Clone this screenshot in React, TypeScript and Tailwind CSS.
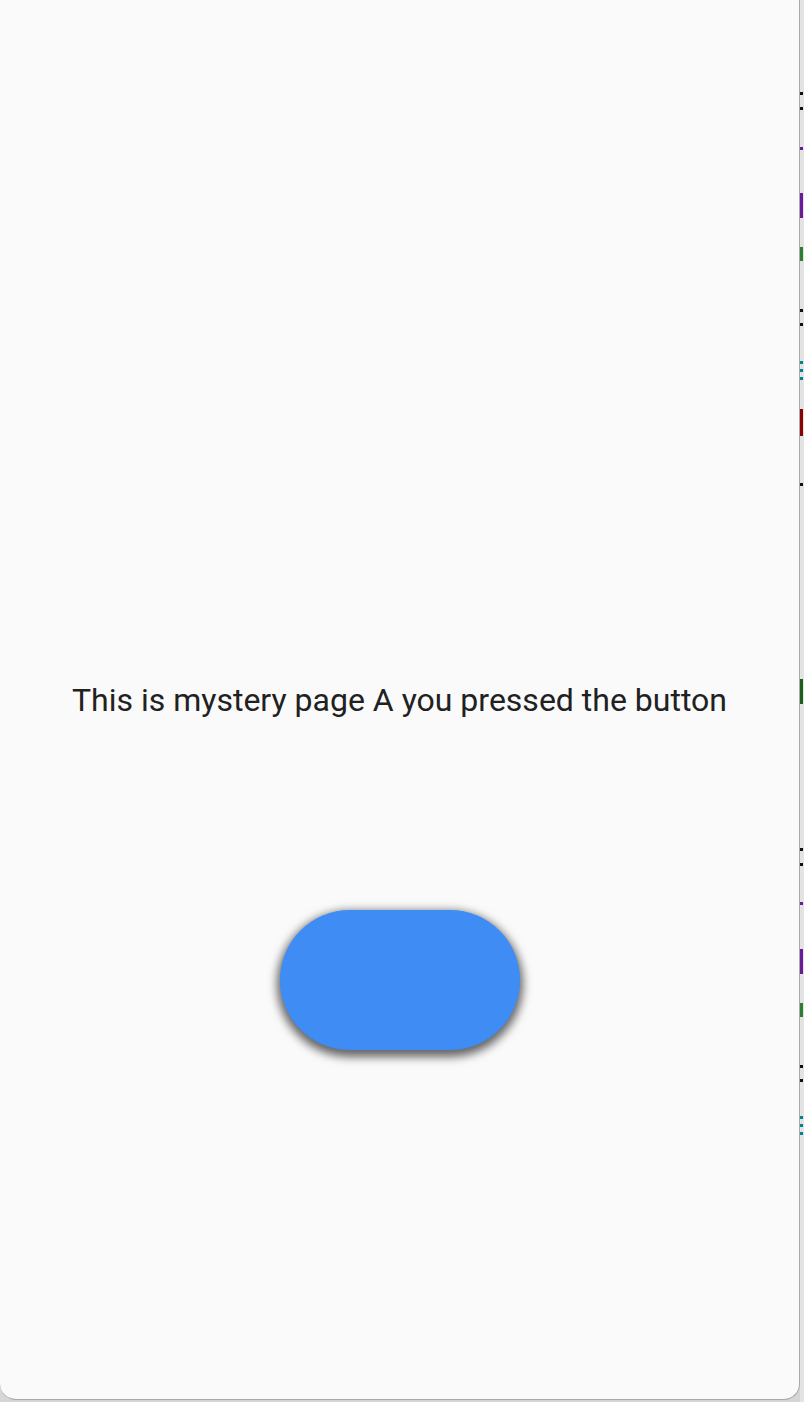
import React from "react";

// bits of the page behind, peeking out past the card's right edge
const PEEK: Array<{ top: number; h: number; color: string }> = [
  { top: 92, h: 3, color: "#111111" },
  { top: 107, h: 3, color: "#111111" },
  { top: 147, h: 3, color: "#6a1b9a" },
  { top: 193, h: 25, color: "#6a1b9a" },
  { top: 247, h: 14, color: "#2e7d32" },
  { top: 309, h: 3, color: "#111111" },
  { top: 323, h: 3, color: "#111111" },
  { top: 361, h: 3, color: "#00838f" },
  { top: 369, h: 3, color: "#00838f" },
  { top: 377, h: 3, color: "#00838f" },
  { top: 409, h: 27, color: "#8b0000" },
  { top: 483, h: 3, color: "#111111" },
  { top: 679, h: 25, color: "#1b5e20" },
  { top: 848, h: 3, color: "#111111" },
  { top: 863, h: 3, color: "#111111" },
  { top: 902, h: 3, color: "#6a1b9a" },
  { top: 949, h: 25, color: "#6a1b9a" },
  { top: 1003, h: 14, color: "#2e7d32" },
  { top: 1065, h: 3, color: "#111111" },
  { top: 1079, h: 3, color: "#111111" },
  { top: 1116, h: 3, color: "#00838f" },
  { top: 1124, h: 3, color: "#00838f" },
  { top: 1132, h: 3, color: "#00838f" },
];

export default function App() {
  return (
    <div className="relative flex h-[1402px] w-[804px] overflow-hidden bg-[#d6d6d6]">
      <div
        className="flex h-[1400px] w-[800px] shrink-0 flex-col items-center rounded-b-[16px] border-r border-b border-[#a8a8a8] bg-[#fafafa] pt-[681px]"
        style={{ fontFamily: "Roboto, 'Liberation Sans', sans-serif" }}
      >
        <p className="text-[32px] leading-[38px] text-[#212121]">This is mystery page A you pressed the button</p>
        <button
          type="button"
          className="mt-[191px] h-[140px] w-[240px] rounded-full bg-[#3f8df4] shadow-[0_4px_10px_3px_rgba(0,0,0,0.6)]"
          aria-label="button"
        />
      </div>
      <div className="relative flex-1 bg-[#e3e3e3]">
        {PEEK.map((p, i) => (
          <div
            key={i}
            className="absolute left-0 w-[3px]"
            style={{ top: p.top, height: p.h, backgroundColor: p.color }}
          />
        ))}
      </div>
    </div>
  );
}
